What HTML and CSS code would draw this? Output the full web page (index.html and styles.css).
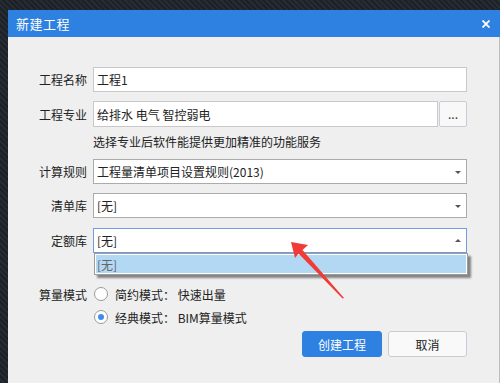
FILE: index.html
```html
<!DOCTYPE html>
<html lang="zh">
<head>
  <meta charset="UTF-8">
  <title>新建工程</title>
  <link rel="stylesheet" href="styles.css">
</head>
<body>
  <div class="dialog">
    <div class="dialog-header">
      <span class="dialog-title">新建工程</span>
      <svg class="close" width="8" height="8" viewBox="0 0 8 8">
        <path d="M0.5 0.5 L7.5 7.5 M7.5 0.5 L0.5 7.5" stroke="#fff" stroke-width="1.8"/>
      </svg>
    </div>

    <div class="dialog-body">
      <div class="row">
        <label class="label">工程名称</label>
        <div class="field input">工程1</div>
      </div>

      <div class="row row-major">
        <label class="label">工程专业</label>
        <div class="field input">给排水 电气 智控弱电</div>
        <button class="more-btn">...</button>
      </div>
      <p class="hint">选择专业后软件能提供更加精准的功能服务</p>

      <div class="row row-rule">
        <label class="label">计算规则</label>
        <div class="field select">工程量清单项目设置规则(2013)<span class="caret down"></span></div>
      </div>

      <div class="row row-list">
        <label class="label">清单库</label>
        <div class="field select">[无]<span class="caret down"></span></div>
      </div>

      <div class="row row-quota">
        <label class="label">定额库</label>
        <div class="field-wrap">
          <div class="field select focused">[无]<span class="caret up"></span></div>
          <div class="dropdown">
            <div class="dropdown-item">[无]</div>
          </div>
        </div>
      </div>

      <div class="row row-mode">
        <label class="label">算量模式</label>
        <div class="radio"><span class="radio-dot"></span>简约模式： 快速出量</div>
      </div>
      <div class="row row-mode2">
        <span class="label"></span>
        <div class="radio"><span class="radio-dot checked"></span>经典模式： BIM算量模式</div>
      </div>

      <div class="actions">
        <button class="btn btn-primary">创建工程</button>
        <button class="btn btn-cancel">取消</button>
      </div>
    </div>
  </div>

  <!-- red annotation arrow -->
  <svg class="annotation" width="500" height="383" viewBox="0 0 500 383">
    <polygon points="291,242 308,245 302.5,250 344,298 342.5,298.5 298.5,253.5 295,258" fill="#f23b36"/>
  </svg>
</body>
</html>
```

FILE: styles.css
```css
:root {
  --blue: #2e81e0;
  --bg: #efefef;
  --text: #222;
}

html, body {
  margin: 0;
  padding: 0;
  height: 100%;
  overflow: hidden;
}

body {
  background: repeating-linear-gradient(45deg, #1c2128 0 2px, #262b34 2px 4px);
  font-family: "Noto Sans CJK SC", "Noto Sans", sans-serif;
  font-size: 12px;
  color: var(--text);
  padding: 10px 0 0 8px;
  box-sizing: border-box;
}

.dialog {
  width: 492px;
  height: 100%;
  display: flex;
  flex-direction: column;
  background-color: var(--bg);
}

.dialog-header {
  height: 27px;
  flex-shrink: 0;
  background-color: var(--blue);
  display: flex;
  align-items: center;
  justify-content: space-between;
  padding: 0 10px 0 8px;
}

.dialog-title {
  color: #fff;
  font-size: 13px;
  letter-spacing: 0.5px;
}

.close {
  display: block;
}

.dialog-body {
  flex: 1;
  padding: 30px 32px 0 19px;
  border-right: 1px solid #bdbdbd;
}

.row {
  display: flex;
  align-items: center;
  gap: 6px;
  height: 25px;
}

.label {
  width: 60px;
  flex-shrink: 0;
  text-align: right;
}

.field {
  flex: 1;
  height: 100%;
  box-sizing: border-box;
  background-color: #fff;
  border: 1px solid #c8c8c8;
  padding: 0 3px;
  display: flex;
  align-items: center;
  position: relative;
  white-space: nowrap;
}

.row-major {
  margin-top: 9px;
  height: 26px;
  gap: 0;
}

.row-major .label {
  margin-right: 6px;
}

.more-btn {
  width: 28px;
  height: 26px;
  margin-left: 1px;
  border: 1px solid #c8ccd4;
  border-radius: 2px;
  background-color: #f8f8f8;
  font-family: inherit;
  font-size: 12px;
  color: #333;
  padding: 0;
  line-height: 20px;
}

.hint {
  margin: 6px 0 0 66px;
  line-height: 18px;
}

.row-rule {
  margin-top: 8px;
}

.row-list {
  margin-top: 9px;
}

.row-quota {
  margin-top: 10px;
}

.select {
  border-color: #ababab;
}

.select.focused {
  border-color: #739be0;
}

.caret {
  position: absolute;
  right: 5px;
  top: 50%;
  width: 0;
  height: 0;
  border-left: 3px solid transparent;
  border-right: 3px solid transparent;
}

.caret.down {
  border-top: 3px solid #555;
  margin-top: -1px;
}

.caret.up {
  border-bottom: 3px solid #555;
  margin-top: -2px;
}

.field-wrap {
  flex: 1;
  height: 100%;
  position: relative;
  display: flex;
}

.dropdown {
  position: absolute;
  top: 100%;
  left: 1px;
  right: -1px;
  height: 22px;
  box-sizing: border-box;
  border: 1px solid #9c9c9c;
  background-color: #fff;
  padding: 1px;
  box-shadow: 3px 3px 2px rgba(0, 0, 0, 0.45);
}

.dropdown-item {
  height: 100%;
  background-color: #b3d8f3;
  color: #666;
  padding-left: 1px;
  display: flex;
  align-items: center;
}

.row-mode {
  margin-top: 31px;
  height: 20px;
}

.row-mode2 {
  margin-top: 3px;
  height: 20px;
}

.radio {
  display: flex;
  align-items: center;
  gap: 7px;
  padding-left: 1px;
}

.radio-dot {
  width: 14px;
  height: 14px;
  box-sizing: border-box;
  border: 1px solid #9a9a9a;
  border-radius: 50%;
  background-color: #fff;
  position: relative;
}

.radio-dot.checked::after {
  content: "";
  position: absolute;
  left: 3px;
  top: 3px;
  width: 6px;
  height: 6px;
  border-radius: 50%;
  background-color: #3d8ee8;
}

.actions {
  display: flex;
  justify-content: flex-end;
  gap: 6px;
  margin-top: 4px;
}

.btn {
  height: 26px;
  border-radius: 3px;
  font-family: inherit;
  font-size: 12px;
  padding: 0;
}

.btn-primary {
  width: 80px;
  background-color: var(--blue);
  border: 1px solid var(--blue);
  color: #fff;
}

.btn-cancel {
  width: 79px;
  background-color: #f9f9f9;
  border: 1px solid #c8ccd4;
  color: #222;
}

.annotation {
  position: absolute;
  left: 0;
  top: 0;
  pointer-events: none;
}
```
